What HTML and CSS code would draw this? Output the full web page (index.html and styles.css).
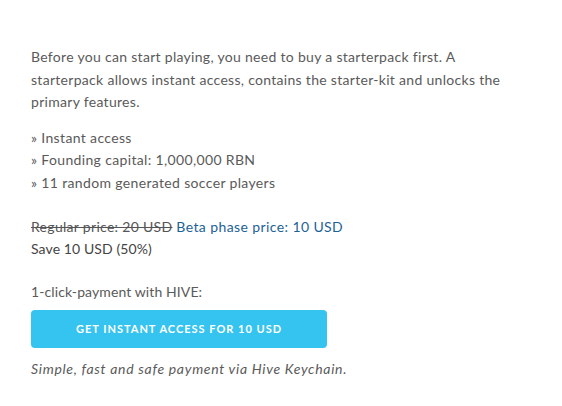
FILE: index.html
```html
<!DOCTYPE html>
<html>
<head>
<meta charset="utf-8">
<link rel="stylesheet" href="styles.css">
</head>
<body>
<div class="content">
  <p class="intro">Before you can start playing, you need to buy a starterpack first. A starterpack allows instant access, contains the starter-kit and unlocks the primary features.</p>
  <ul class="features">
    <li>» Instant access</li>
    <li>» Founding capital: 1,000,000 RBN</li>
    <li>» 11 random generated soccer players</li>
  </ul>
  <div class="prices">
    <div><span class="old">Regular price: 20 USD</span> <span class="beta">Beta phase price: 10 USD</span></div>
    <div class="save">Save 10 USD (50%)</div>
  </div>
  <div class="pay-label">1-click-payment with HIVE:</div>
  <button class="buy">GET INSTANT ACCESS FOR 10 USD</button>
  <div class="note">Simple, fast and safe payment via Hive Keychain.</div>
</div>
</body>
</html>
```
FILE: styles.css
```css
html, body {
  margin: 0;
  padding: 0;
  background: #ffffff;
}
body {
  font-family: Lato, "Open Sans", sans-serif;
  font-size: 14px;
  color: #5a5a5a;
  line-height: 22.5px;
  letter-spacing: 0.3px;
}
.content {
  padding: 46px 0 0 31px;
  width: 486px;
  display: flex;
  flex-direction: column;
  align-items: flex-start;
}
.intro {
  margin: 0;
}
.features {
  list-style: none;
  margin: 13px 0 0 0;
  padding: 0;
  letter-spacing: 0.35px;
}
.prices {
  margin-top: 22px;
  line-height: 21.5px;
}
.old {
  text-decoration: line-through;
  color: #555555;
}
.beta {
  color: #1d6296;
  letter-spacing: 0.4px;
}
.save {
  color: #444444;
  letter-spacing: 0.1px;
}
.pay-label {
  margin-top: 22px;
  letter-spacing: 0.1px;
}
.buy {
  margin-top: 6px;
  width: 296px;
  height: 38px;
  border: none;
  border-radius: 4px;
  background: #35c3ef;
  color: #ffffff;
  font-family: Lato, "Open Sans", sans-serif;
  font-weight: 700;
  font-size: 11px;
  letter-spacing: 1px;
  cursor: pointer;
}
.note {
  margin-top: 10px;
  font-style: italic;
  letter-spacing: 0.7px;
}
```
